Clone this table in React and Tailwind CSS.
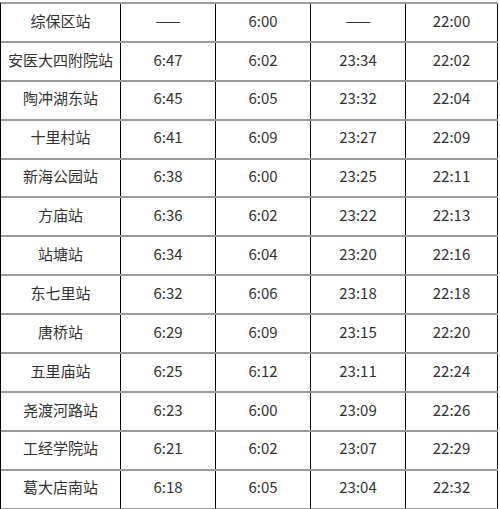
import React from "react";

const rows = [
  ["综保区站", "——", "6:00", "——", "22:00"],
  ["安医大四附院站", "6:47", "6:02", "23:34", "22:02"],
  ["陶冲湖东站", "6:45", "6:05", "23:32", "22:04"],
  ["十里村站", "6:41", "6:09", "23:27", "22:09"],
  ["新海公园站", "6:38", "6:00", "23:25", "22:11"],
  ["方庙站", "6:36", "6:02", "23:22", "22:13"],
  ["站塘站", "6:34", "6:04", "23:20", "22:16"],
  ["东七里站", "6:32", "6:06", "23:18", "22:18"],
  ["唐桥站", "6:29", "6:09", "23:15", "22:20"],
  ["五里庙站", "6:25", "6:12", "23:11", "22:24"],
  ["尧渡河路站", "6:23", "6:00", "23:09", "22:26"],
  ["工经学院站", "6:21", "6:02", "23:07", "22:29"],
  ["葛大店南站", "6:18", "6:05", "23:04", "22:32"],
];

const widths = ["w-[120px]", "w-[95px]", "w-[95px]", "w-[95px]", "w-[92px]"];

export default function App() {
  return (
    <div
      className="w-[500px] h-[509px] bg-white overflow-hidden text-[#333] text-[15px]"
      style={{ fontFamily: '"Noto Sans CJK SC", "Noto Sans", sans-serif' }}
    >
      {/* 时刻表 */}
      <div className="mt-[2px] w-[498px] border-t-2 border-l border-t-[#9a9a9a] border-l-black">
        {rows.map((row, i) => (
          <div key={i} className="flex h-[38.9px] border-b-2 border-[#9a9a9a]">
            {row.map((cell, j) => (
              <div
                key={j}
                className={`${widths[j]} flex items-center justify-center pb-[3px] border-r border-r-black`}
              >
                {cell}
              </div>
            ))}
          </div>
        ))}
      </div>
    </div>
  );
}
